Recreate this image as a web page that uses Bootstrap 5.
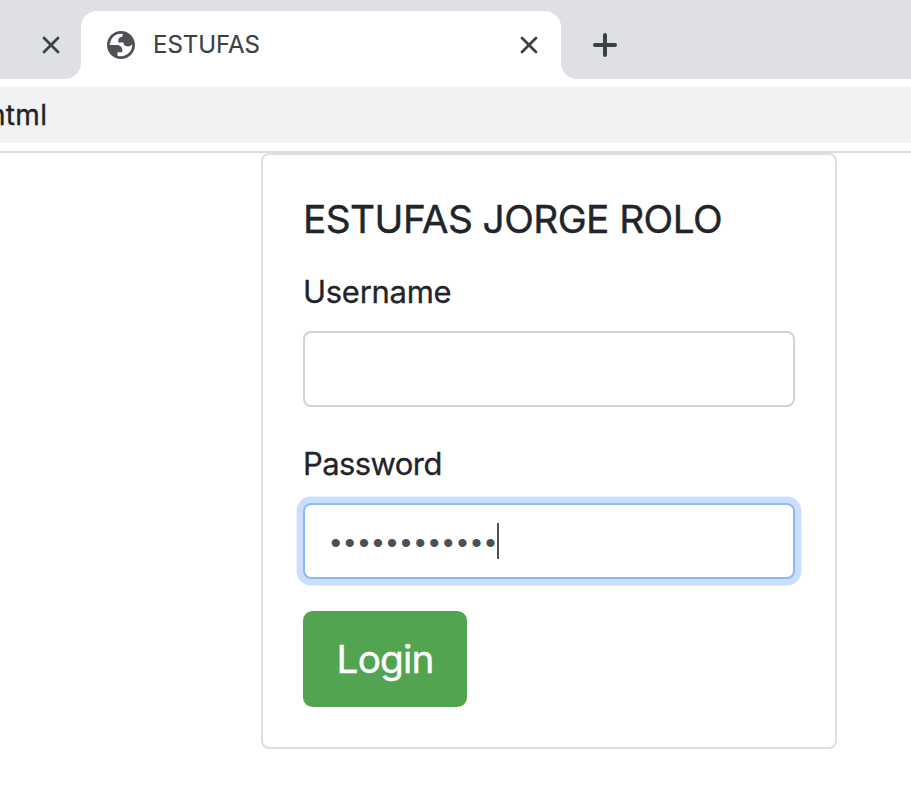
<!DOCTYPE html>
<html lang="en">
<head>
<meta charset="utf-8">
<meta name="viewport" content="width=device-width, initial-scale=1">
<title>ESTUFAS</title>
<link href="https://cdn.jsdelivr.net/npm/bootstrap@5.3.0/dist/css/bootstrap.min.css" rel="stylesheet">
<style>
html{font-size:32px}
body{font-family:Inter,"Liberation Sans",sans-serif;background:#fff;color:#212529;overflow:hidden;--bs-border-width:2px}
.tab-strip{height:79px;background:#dfe0e5;padding-top:11px}
.prev-tab{width:81px;padding-left:42px}
.active-tab{width:480px;background:#fff;border-radius:16px 16px 0 0;padding:0 23px 0 26px}
.active-tab::before,.active-tab::after{content:"";position:absolute;bottom:0;width:16px;height:16px}
.active-tab::before{left:-16px;background:radial-gradient(circle at 0 0,transparent 15.5px,#fff 16.2px)}
.active-tab::after{right:-16px;background:radial-gradient(circle at 100% 0,transparent 15.5px,#fff 16.2px)}
.tab-label{font-size:24px;line-height:32px;margin-left:18px;color:#3c4043;letter-spacing:-.05px;-webkit-text-stroke:.15px}
.new-tab{margin-left:31px}
.address-area{height:74px;padding:8px 0;border-bottom:2px solid #dadbe0}
.address-field{height:56px;background:#f1f2f4}
.url-text{font-size:28px;color:#202124;margin-left:-11px;letter-spacing:.3px;-webkit-text-stroke:.3px}
.login-card{width:576px;margin-left:261px;--bs-card-border-color:#dfdfdf;--bs-card-border-radius:8px;--bs-card-border-width:2px}
.login-card .card-body{padding:40px}
.login-card .card-title{font-size:38.8px;line-height:48px;margin-bottom:24px;font-weight:400;letter-spacing:-.56px;-webkit-text-stroke:.4px}
.login-card .form-label{font-size:31px;line-height:46px;padding:2px 0 0;margin-bottom:16px;display:block;letter-spacing:-.28px;-webkit-text-stroke:.3px}
.login-card .pass-label{letter-spacing:-.58px}
.login-card .form-control{height:76px;border:2px solid #ced4da;border-radius:8px;padding:12px 24px}
.login-card .pass-input{border-color:#8bbafa;box-shadow:0 0 0 6.4px #cbdeff;font-family:"Liberation Sans",Arial,sans-serif;font-size:30px;padding:16px 24px 12px 25.500px;color:#495057;letter-spacing:3.57px}
.text-caret{left:194px;top:20px;width:2px;height:36px;background:#495057}
.login-btn{--bs-btn-bg:#53a451;--bs-btn-border-color:#53a451;--bs-btn-color:#fff;--bs-btn-border-radius:9.6px;--bs-btn-border-width:2px;width:164px;height:96px;padding:16px 0;font-size:38.8px;line-height:60px;letter-spacing:-.9px;-webkit-text-stroke:.4px}
</style>
<script src="https://cdn.jsdelivr.net/npm/bootstrap@5.3.0/dist/js/bootstrap.bundle.min.js"></script>
</head>
<body>
<header>
  <div class="tab-strip d-flex">
    <div class="prev-tab d-flex align-items-center">
      <svg width="18" height="18" viewBox="0 0 18 18" fill="none" stroke="#3c4043" stroke-width="2.8" stroke-linecap="round"><path d="M2 2l14 14M16 2L2 16"/></svg>
    </div>
    <div class="active-tab d-flex align-items-center position-relative">
      <svg width="28" height="28" viewBox="2 2 20 20" fill="#505157" fill-rule="evenodd"><path d="M12 2C6.480 2 2 6.480 2 12s4.480 10 10 10 10-4.480 10-10S17.520 2 12 2zM4 12h4.400c3.407.022 4.922 1.730 4.543 5.127H9.488v2.470a8.004 8.004 0 0 0 10.498-8.080C19.327 12.506 18.332 13 17 13c-2.137 0-3.206-.916-3.206-2.750h-3.748c-.274-2.728.683-4.092 2.870-4.092 0-.975.327-1.597.811-1.970A8.004 8.004 0 0 0 4 12z"/></svg>
      <span class="tab-label">ESTUFAS</span>
      <svg class="ms-auto" width="18" height="18" viewBox="0 0 18 18" fill="none" stroke="#3c4043" stroke-width="2.8" stroke-linecap="round"><path d="M2 2l14 14M16 2L2 16"/></svg>
    </div>
    <div class="new-tab d-flex align-items-center">
      <svg width="26" height="26" viewBox="0 0 26 26" fill="none" stroke="#3c4043" stroke-width="4" stroke-linecap="round"><path d="M13 3v20M3 13h20"/></svg>
    </div>
  </div>
  <div class="address-area">
    <div class="address-field d-flex align-items-center overflow-hidden"><span class="url-text">html</span></div>
  </div>
</header>
<main>
  <div class="card login-card">
    <form class="card-body">
      <h5 class="card-title">ESTUFAS JORGE ROLO</h5>
      <div class="mb-3">
        <label class="form-label" for="username">Username</label>
        <input class="form-control" id="username" type="text">
      </div>
      <div class="mb-3">
        <label class="form-label pass-label" for="password">Password</label>
        <div class="position-relative">
          <input class="form-control pass-input" id="password" type="password" value="abcdefghijkl">
          <span class="text-caret position-absolute"></span>
        </div>
      </div>
      <button class="btn login-btn d-block" type="button">Login</button>
    </form>
  </div>
</main>
</body>
</html>
